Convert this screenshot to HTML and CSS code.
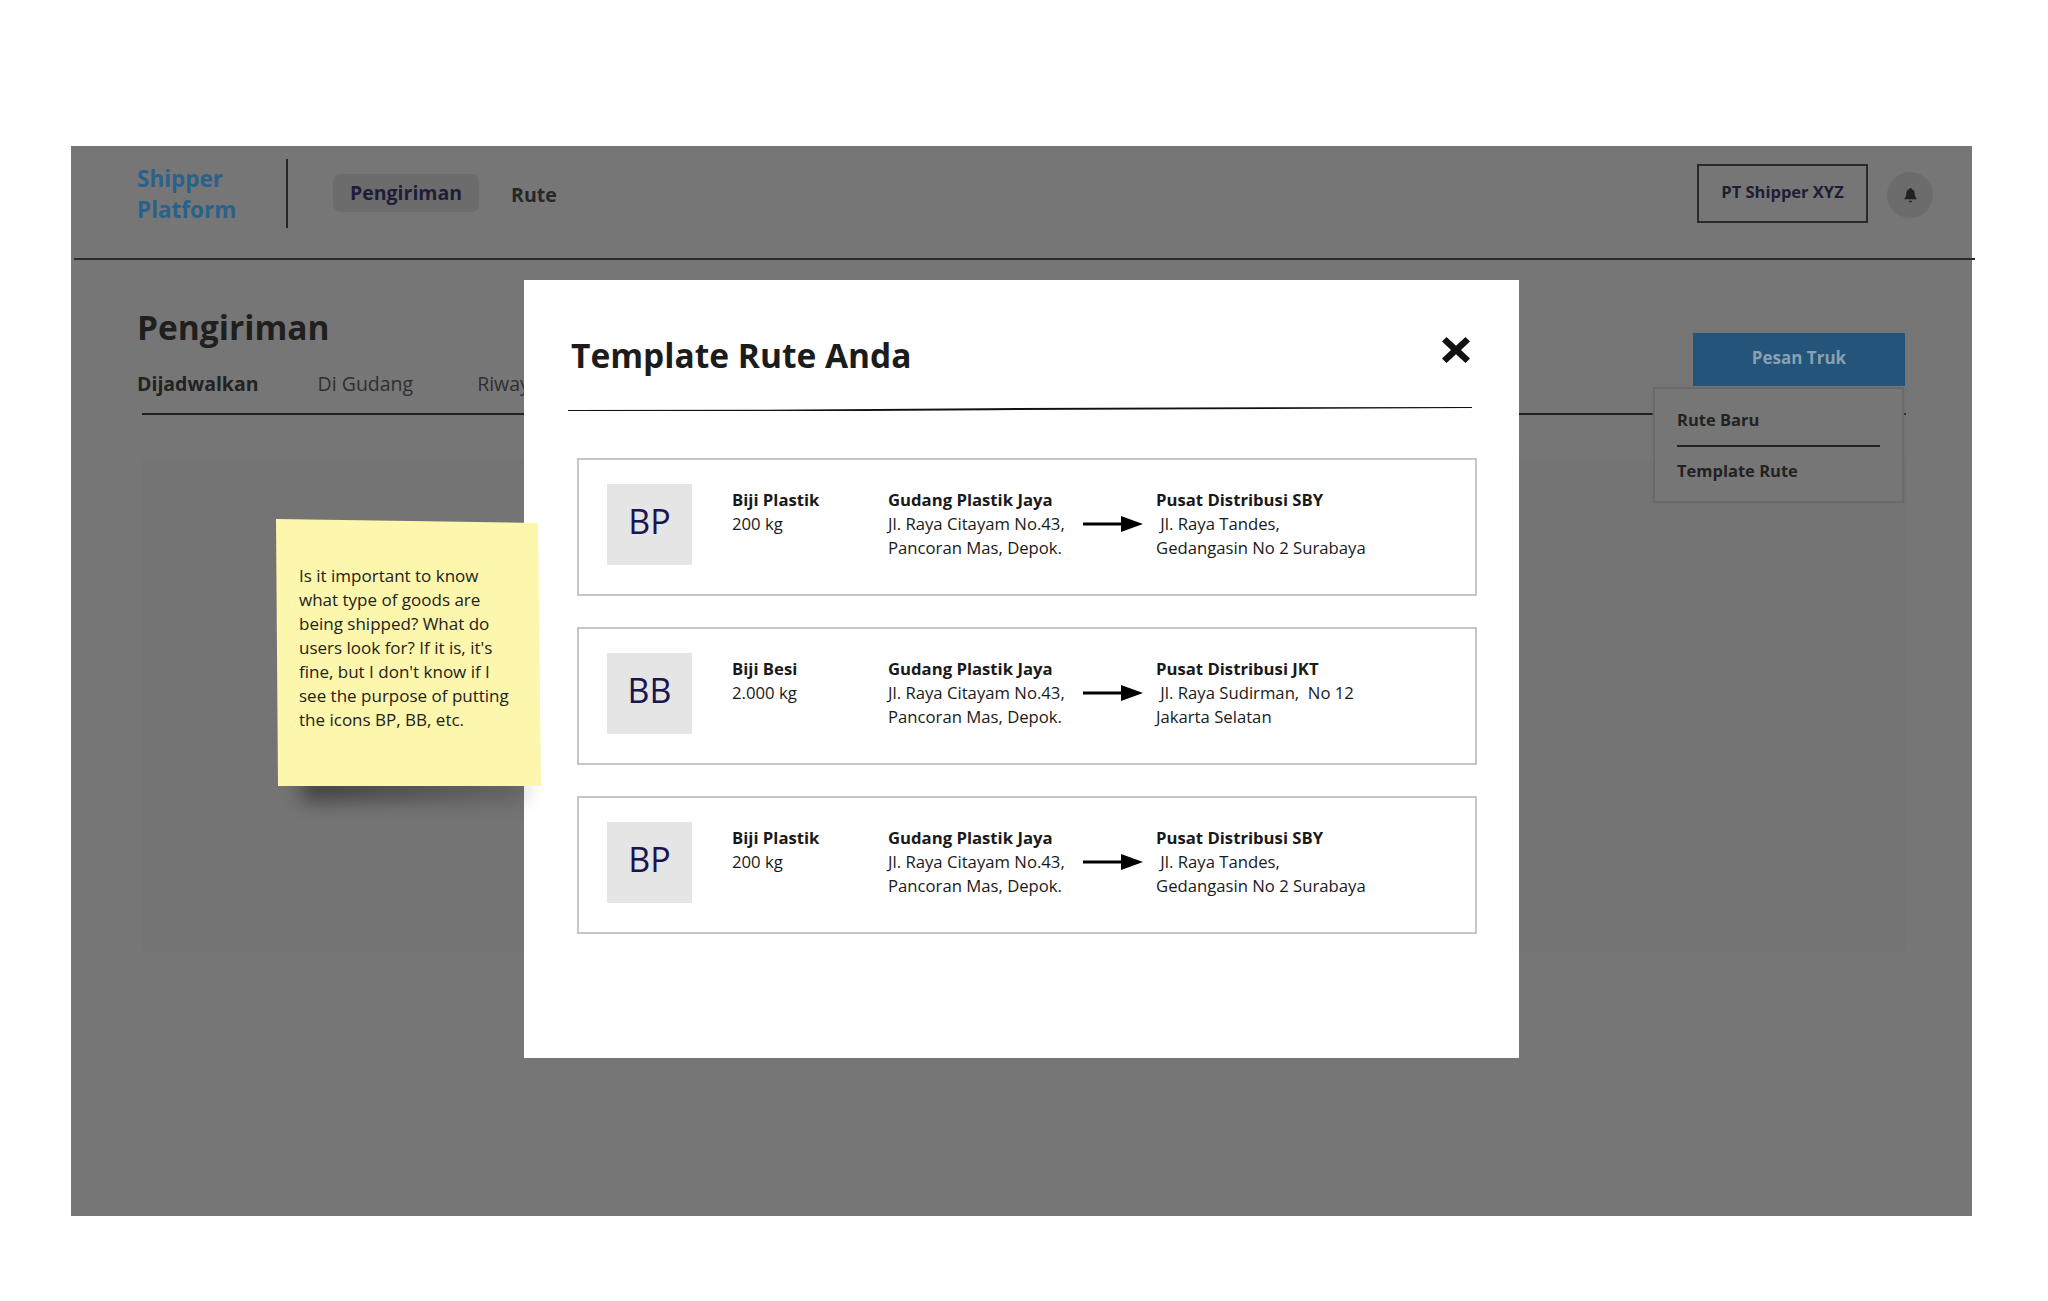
FILE: index.html
```html
<!DOCTYPE html>
<html lang="id">
<head>
<meta charset="utf-8">
<title>Template Rute Anda</title>
<link rel="stylesheet" href="styles.css">
</head>
<body>
<main class="frame">
  <header class="topbar">
    <div class="logo">Shipper<br>Platform</div>
    <nav class="mainnav">
      <a class="navlink active">Pengiriman</a>
      <a class="navlink rute">Rute</a>
    </nav>
    <div class="account">PT Shipper XYZ</div>
    <div class="bell">
      <svg viewBox="0 0 16 16" width="15" height="16"><path d="M8 0.6c.8 0 1.3.5 1.3 1.2 2.2.6 3.2 2.4 3.2 4.6 0 3 .9 4.2 2 5.2v1H1.5v-1c1.1-1 2-2.2 2-5.2 0-2.2 1-4 3.2-4.6C6.700 1.100 7.200.6 8 .6zM6.200 14h3.600c0 1-.8 1.700-1.800 1.700S6.200 15 6.200 14z"/></svg>
    </div>
  </header>
  <section class="page">
    <div class="pagehead">
      <h1 class="pagetitle">Pengiriman</h1>
      <button class="cta">Pesan Truk</button>
    </div>
    <div class="tabs">
      <span class="tab on">Dijadwalkan</span>
      <span class="tab">Di Gudang</span>
      <span class="tab last">Riwayat</span>
    </div>
    <div class="panel"></div>
  </section>

  <div class="menu">
    <div class="menuitem first">Rute Baru</div>
    <div class="menuitem">Template Rute</div>
  </div>

  <div class="modal">
    <div class="modalhead">
      <h2 class="modaltitle">Template Rute Anda</h2>
      <svg class="close" viewBox="0 0 30 28" width="30" height="28"><path d="M1 5.500 5.500 1 15 9.700 24.500 1 29 5.500 20 14l9 8.500-4.500 4.500L15 18.300 5.500 27 1 22.500 10 14z"/></svg>
    </div>
    <svg class="rule" viewBox="0 0 904 4" preserveAspectRatio="none" width="904" height="4"><polygon points="0,3 200,2.700 420,1.200 700,.2 904,0 904,1 700,2 420,3.200 200,4.600 0,4.200"/></svg>
    <div class="cards">
      <article class="card">
        <div class="badge">BP</div>
        <div class="goods"><b>Biji Plastik</b><br>200 kg</div>
        <div class="origin"><b>Gudang Plastik Jaya</b><br>Jl. Raya Citayam No.43,<br>Pancoran Mas, Depok.</div>
        <svg class="arrow" viewBox="0 0 60 16" width="60" height="16"><path d="M0 6.500h38V0l22 8-22 8V9.500H0z"/></svg>
        <div class="dest"><b>Pusat Distribusi SBY</b><br>&nbsp;Jl. Raya Tandes,<br>Gedangasin No 2 Surabaya</div>
      </article>
      <article class="card">
        <div class="badge">BB</div>
        <div class="goods"><b>Biji Besi</b><br>2.000 kg</div>
        <div class="origin"><b>Gudang Plastik Jaya</b><br>Jl. Raya Citayam No.43,<br>Pancoran Mas, Depok.</div>
        <svg class="arrow" viewBox="0 0 60 16" width="60" height="16"><path d="M0 6.500h38V0l22 8-22 8V9.500H0z"/></svg>
        <div class="dest"><b>Pusat Distribusi JKT</b><br>&nbsp;Jl. Raya Sudirman,&nbsp; No 12<br>Jakarta Selatan</div>
      </article>
      <article class="card">
        <div class="badge">BP</div>
        <div class="goods"><b>Biji Plastik</b><br>200 kg</div>
        <div class="origin"><b>Gudang Plastik Jaya</b><br>Jl. Raya Citayam No.43,<br>Pancoran Mas, Depok.</div>
        <svg class="arrow" viewBox="0 0 60 16" width="60" height="16"><path d="M0 6.500h38V0l22 8-22 8V9.500H0z"/></svg>
        <div class="dest"><b>Pusat Distribusi SBY</b><br>&nbsp;Jl. Raya Tandes,<br>Gedangasin No 2 Surabaya</div>
      </article>
    </div>
  </div>

  <aside class="sticky">
    <div class="stickyshadow"></div>
    <div class="stickypaper">Is it important to know what type of goods are being shipped? What do users look for? If it is, it's fine, but I don't know if I see the purpose of putting the icons BP, BB, etc.</div>
  </aside>
</main>
</body>
</html>
```

FILE: styles.css
```css
* { box-sizing: border-box; }
html, body { margin: 0; background: #fff; }
body { font-family: "Open Sans", "Liberation Sans", sans-serif; color: #222; height: 1301px; overflow: hidden; }

.frame { position: relative; width: 1901px; height: 1070px; margin: 146px 0 0 71px; background: #767676; }

.topbar { display: flex; align-items: center; height: 114px; margin: 0 -3px 0 3px; padding: 0 42px 0 63px; border-bottom: 2px solid #2b2b2b; }
.logo { width: 151px; height: 69px; margin-top: -18px; padding-top: 4px; border-right: 2px solid #262626; color: #28628c; font-weight: 700; font-size: 22.500px; line-height: 31px; }
.mainnav { display: flex; align-items: center; gap: 32px; margin-left: 45px; flex: 1; margin-top: -19px; }
.navlink { color: #1f1c3a; font-weight: 700; font-size: 19.500px; line-height: 38px; }
.navlink.active { padding: 0 17px; background: #6c6c6c; border-radius: 8px; }
.navlink.rute { color: #262626; margin-top: 4px; }
.account { display: flex; align-items: center; justify-content: center; width: 171px; height: 59px; margin-top: -17px; border: 2px solid #2a2a2a; color: #1e1c36; font-weight: 700; font-size: 16.500px; padding-bottom: 4px; }
.bell { display: flex; align-items: center; justify-content: center; width: 46px; height: 46px; margin-left: 19px; margin-top: -15px; border-radius: 50%; background: #6c6c6c; }
.bell svg { fill: #222; }

.page { padding: 0 66px 0 66px; }
.pagehead { display: flex; justify-content: space-between; height: 74px; padding-top: 44px; }
.pagetitle { margin: 0; font-size: 33.500px; line-height: 46px; font-weight: 700; color: #1f1f1f; }
.cta { width: 212px; height: 53px; margin: 29px 1px 0 0; border: 0; background: #24547a; color: #88a0b3; font: 700 17px "Open Sans", sans-serif; padding: 0 0 4px; }
.tabs { display: flex; gap: 59px; height: 83px; padding-top: 36px; position: relative; }
.tab { font-size: 19.500px; line-height: 27px; color: #2f2f2f; }
.tab.on { font-weight: 700; color: #222; }
.tab.last { margin-left: 5px; }
.tabs::after { content: ""; position: absolute; left: 5px; right: 0; top: 79px; height: 2px; background: #1f1f1f; }
.panel { margin: 42px 0 0 5px; background: #747474; height: 492px; }

.menu { position: absolute; left: 1582px; top: 241px; width: 251px; height: 116px; padding: 19px 22px 0; background: #767676; border: 2px solid #6a6a6a; box-shadow: 0 0 2px #6e6e6e; }
.menuitem { font-weight: 700; font-size: 16.500px; line-height: 24px; color: #222; padding-top: 12px; }
.menuitem.first { height: 39px; padding-top: 0; border-bottom: 2px solid #222; }

.modal { position: absolute; left: 453px; top: 134px; width: 995px; height: 778px; padding: 0 47px 0 44px; background: #fff; }
.modalhead { display: flex; justify-content: space-between; height: 128px; padding: 52px 1px 0 3px; }
.modaltitle { margin: 0; font-size: 33.500px; line-height: 46px; font-weight: 700; color: #1c1c1c; }
.close { margin-top: 4px; fill: #111; }
.rule { display: block; fill: #111; margin-top: -1px; }
.cards { display: flex; flex-direction: column; gap: 31px; margin: 47px -5px 0 9px; }
.card { display: flex; height: 138px; border: 2px solid #c6c6c6; padding: 24px 0 0 28px; font-size: 16.700px; line-height: 24px; color: #1a1a1a; background: #fff; }
.card b { font-weight: 700; }
.badge { flex: none; display: flex; align-items: center; justify-content: center; width: 85px; height: 81px; padding-bottom: 8px; background: #e5e5e5; color: #1a1450; font-size: 34px; }
.goods { flex: none; width: 156px; margin-left: 40px; padding-top: 4px; }
.origin { flex: none; width: 195px; padding-top: 4px; }
.arrow { flex: none; margin: 32px 13px 0 0; fill: #000; }
.dest { padding-top: 4px; }

.sticky { position: absolute; left: 205px; top: 373px; width: 265px; height: 267px; }
.stickypaper { position: relative; height: 100%; padding: 45px 31px 0 23px; background: #fdf6ad; font-size: 17px; line-height: 24px; color: #222218; clip-path: polygon(0 0, 262px 4px, 265px 100%, 2px 100%); }
.stickyshadow { position: absolute; left: 26px; right: 14px; bottom: -14px; height: 24px; background: linear-gradient(90deg, rgba(0,0,0,.5), rgba(0,0,0,.15)); filter: blur(10px); }
```
